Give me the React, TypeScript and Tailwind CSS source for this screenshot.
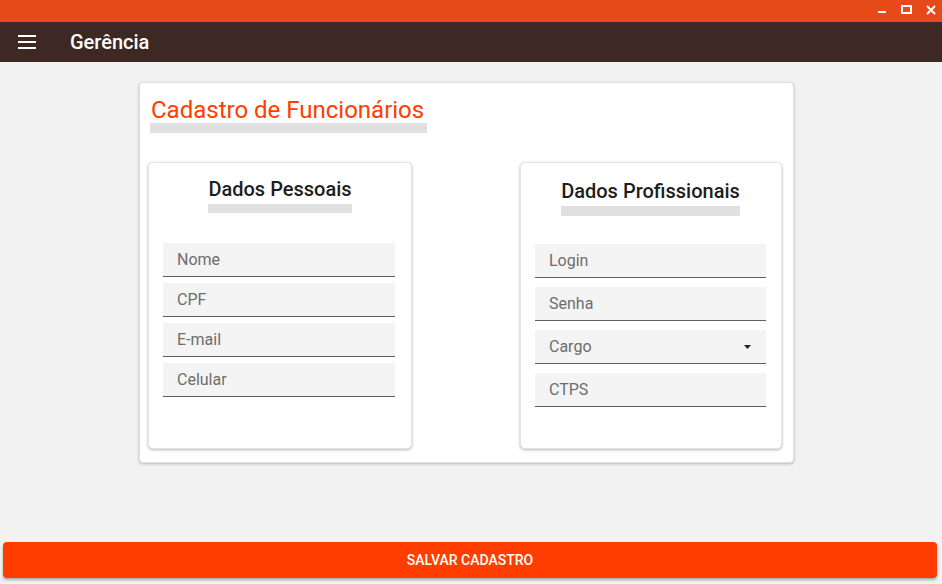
import React from "react";

const font = { fontFamily: "Roboto, 'Liberation Sans', sans-serif" };

function Field({ label, select }: { label: string; select?: boolean }) {
  return (
    <div className="flex h-[34px] items-center justify-between border-b border-[#5f5f5f] bg-[#f4f4f4] pl-[14px] pr-[15px]">
      <span className="text-[16px] text-[#6d6d6d]">{label}</span>
      {select && (
        <svg width="7" height="4" viewBox="0 0 7 4">
          <path d="M0 0 L7 0 L3.5 4 Z" fill="#222" />
        </svg>
      )}
    </div>
  );
}

export default function App() {
  return (
    <div className="flex h-[584px] w-[942px] flex-col overflow-hidden bg-[#f2f2f2]" style={font}>
      {/* title bar */}
      <div className="relative h-[22px] bg-[#e64a19]">
        <div className="absolute left-[878px] top-[11px] h-[2px] w-[8px] bg-white" />
        <div className="absolute left-[901px] top-[5px] h-[9px] w-[11px] border-2 border-white" />
        <svg className="absolute left-[926px] top-[5px]" width="10" height="10" viewBox="0 0 10 10">
          <path d="M1 1 L9 9 M9 1 L1 9" stroke="white" strokeWidth="2" />
        </svg>
      </div>
      {/* app bar */}
      <div className="flex h-[40px] items-center bg-[#3e2824]">
        <div className="ml-[18px] flex w-[18px] flex-col gap-[4px]">
          <div className="h-[2px] bg-white" />
          <div className="h-[2px] bg-white" />
          <div className="h-[2px] bg-white" />
        </div>
        <span className="ml-[34px] text-[20px] font-medium text-white">Gerência</span>
      </div>

      {/* main card */}
      <div className="ml-[139px] mt-[20px] w-[655px] rounded-[4px] border border-[#e0e0e0] bg-white pb-[13px] pl-[8px] pt-[11px] shadow-[0_1px_3px_rgba(0,0,0,0.25)]">
        <div className="ml-[2px] inline-flex flex-col">
          <div className="pl-[1px] text-[24px] leading-[32px] text-[#ff3d00]">Cadastro de Funcionários</div>
          <div className="mt-[-3px] h-[10px] w-[277px] bg-[#e0e0e0]" />
        </div>
        <div className="mt-[29px] flex gap-[108px]">
          {/* left card */}
          <div className="h-[287px] w-[264px] rounded-[5px] border border-[#e6e6e6] bg-white pl-[14px] pr-[16px] pt-[14px] shadow-[0_1px_3px_rgba(0,0,0,0.3)]">
            <div className="flex flex-col items-center">
              <div className="ml-[2px] text-[20px] font-medium leading-[24px] text-[#1d1d1d]">Dados Pessoais</div>
              <div className="ml-[2px] mt-[3px] h-[9px] w-[144px] bg-[#e0e0e0]" />
            </div>
            <div className="mt-[30px] flex flex-col gap-[6px]">
              <Field label="Nome" />
              <Field label="CPF" />
              <Field label="E-mail" />
              <Field label="Celular" />
            </div>
          </div>
          {/* right card */}
          <div className="h-[287px] w-[262px] rounded-[5px] border border-[#e6e6e6] bg-white pl-[14px] pr-[15px] pt-[16px] shadow-[0_1px_3px_rgba(0,0,0,0.3)]">
            <div className="flex flex-col items-center">
              <div className="text-[20px] font-medium leading-[24px] text-[#1d1d1d]">Dados Profissionais</div>
              <div className="mt-[3px] h-[10px] w-[179px] bg-[#e0e0e0]" />
            </div>
            <div className="mt-[28px] flex flex-col gap-[9px]">
              <Field label="Login" />
              <Field label="Senha" />
              <Field label="Cargo" select />
              <Field label="CTPS" />
            </div>
          </div>
        </div>
      </div>

      <div className="flex-1" />
      {/* save button */}
      <div className="mb-[6px] ml-[3px] flex h-[36px] w-[934px] items-center justify-center rounded-[4px] bg-[#ff3d00] shadow-[0_2px_3px_rgba(0,0,0,0.3)]">
        <span className="text-[14px] font-medium text-white">SALVAR CADASTRO</span>
      </div>
    </div>
  );
}
